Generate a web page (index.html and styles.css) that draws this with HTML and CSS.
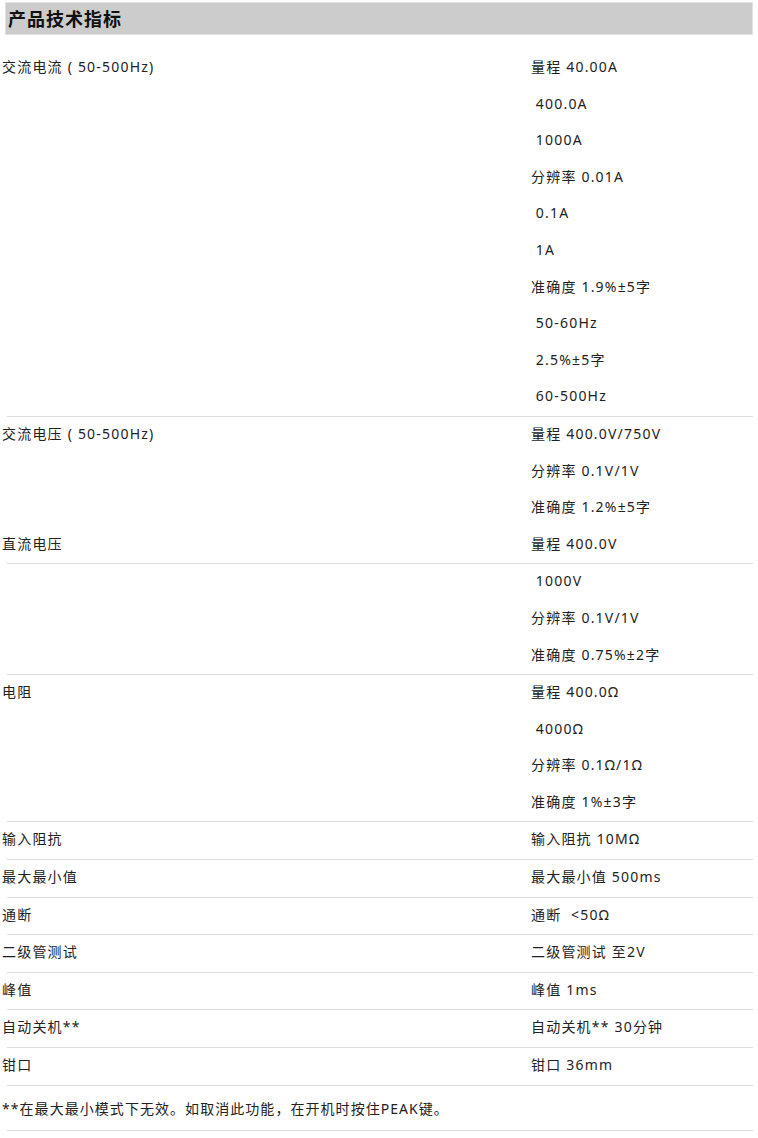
FILE: index.html
```html
<!DOCTYPE html>
<html lang="zh">
<head>
<meta charset="utf-8">
<title>产品技术指标</title>
<link rel="stylesheet" href="styles.css">
</head>
<body>
<div class="page">
  <h2 class="title">产品技术指标</h2>
  <div class="spec">
    <div class="block">
      <div class="line"><span class="k">交流电流 ( 50-500Hz)</span><span class="v">量程 40.00A</span></div>
      <div class="line"><span class="k"></span><span class="v"> 400.0A</span></div>
      <div class="line"><span class="k"></span><span class="v"> 1000A</span></div>
      <div class="line"><span class="k"></span><span class="v">分辨率 0.01A</span></div>
      <div class="line"><span class="k"></span><span class="v"> 0.1A</span></div>
      <div class="line"><span class="k"></span><span class="v"> 1A</span></div>
      <div class="line"><span class="k"></span><span class="v">准确度 1.9%±5字</span></div>
      <div class="line"><span class="k"></span><span class="v"> 50-60Hz</span></div>
      <div class="line"><span class="k"></span><span class="v"> 2.5%±5字</span></div>
      <div class="line"><span class="k"></span><span class="v"> 60-500Hz</span></div>
    </div>
    <div class="block">
      <div class="line"><span class="k">交流电压 ( 50-500Hz)</span><span class="v">量程 400.0V/750V</span></div>
      <div class="line"><span class="k"></span><span class="v">分辨率 0.1V/1V</span></div>
      <div class="line"><span class="k"></span><span class="v">准确度 1.2%±5字</span></div>
      <div class="line"><span class="k">直流电压</span><span class="v">量程 400.0V</span></div>
    </div>
    <div class="block">
      <div class="line"><span class="k"></span><span class="v"> 1000V</span></div>
      <div class="line"><span class="k"></span><span class="v">分辨率 0.1V/1V</span></div>
      <div class="line"><span class="k"></span><span class="v">准确度 0.75%±2字</span></div>
    </div>
    <div class="block">
      <div class="line"><span class="k">电阻</span><span class="v">量程 400.0Ω</span></div>
      <div class="line"><span class="k"></span><span class="v"> 4000Ω</span></div>
      <div class="line"><span class="k"></span><span class="v">分辨率 0.1Ω/1Ω</span></div>
      <div class="line"><span class="k"></span><span class="v">准确度 1%±3字</span></div>
    </div>
    <div class="block">
      <div class="line"><span class="k">输入阻抗</span><span class="v">输入阻抗 10MΩ</span></div>
    </div>
    <div class="block">
      <div class="line"><span class="k">最大最小值</span><span class="v">最大最小值 500ms</span></div>
    </div>
    <div class="block">
      <div class="line"><span class="k">通断</span><span class="v">通断  &lt;50Ω</span></div>
    </div>
    <div class="block">
      <div class="line"><span class="k">二级管测试</span><span class="v">二级管测试 至2V</span></div>
    </div>
    <div class="block">
      <div class="line"><span class="k">峰值</span><span class="v">峰值 1ms</span></div>
    </div>
    <div class="block">
      <div class="line"><span class="k">自动关机**</span><span class="v">自动关机** 30分钟</span></div>
    </div>
    <div class="block">
      <div class="line"><span class="k">钳口</span><span class="v">钳口 36mm</span></div>
    </div>
    <div class="block note">
      <p class="note-text">**在最大最小模式下无效。如取消此功能，在开机时按住PEAK键。</p>
    </div>
  </div>
</div>
</body>
</html>
```

FILE: styles.css
```css
html, body {
  margin: 0;
  padding: 0;
  background: #ffffff;
}

body {
  font-family: "Noto Sans", "Noto Sans CJK SC", sans-serif;
  color: #222222;
  font-size: 14px;
  letter-spacing: 1.2px;
}

.page {
  width: 751px;
  padding: 2px 0 0 2px;
}

.title {
  margin: 0 0 0 3px;
  height: 31px;
  background: #cccccc;
  border: 1px solid #e2e2e2;
  font-family: "Noto Sans CJK SC", sans-serif;
  font-size: 18px;
  font-weight: bold;
  line-height: 31px;
  letter-spacing: 1px;
  color: #111111;
  padding-left: 2px;
}

.spec {
  margin-top: 15px;
}

.block::after {
  content: "";
  display: block;
  height: 1px;
  margin-left: 5px;
  background: #dcdcdc;
}

.line {
  display: grid;
  grid-template-columns: 529px 1fr;
  height: 34px;
  padding-bottom: 2.6px;
  line-height: 34px;
}

.k, .v {
  white-space: pre;
}

.note-text {
  margin: 0;
  padding: 6px 0 4px;
  line-height: 34px;
  letter-spacing: 1.05px;
}
```
